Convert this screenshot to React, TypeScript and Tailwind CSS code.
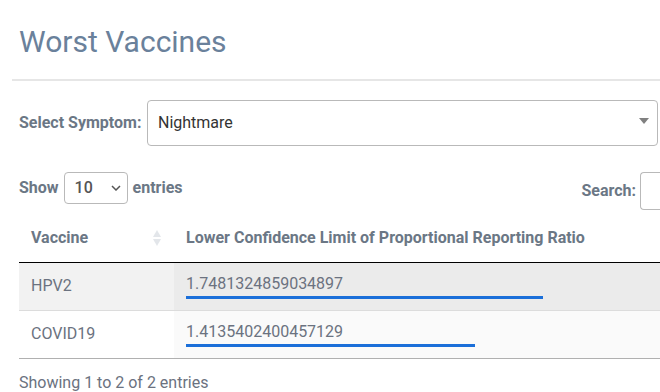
import React from 'react';

const rows = [
  { vaccine: 'HPV2', value: 1.7481324859034897 },
  { vaccine: 'COVID19', value: 1.4135402400457129 },
];

// widest bar in px, scaled by the max value
const maxBar = 357;
const maxValue = Math.max(...rows.map((r) => r.value));

const SortIcon = () => (
  <svg width="10" height="18" viewBox="0 0 10 18" className="text-gray-300">
    <path d="M5 1 L9 8 L1 8 Z" fill="currentColor" opacity="0.6" />
    <path d="M5 17 L9 10 L1 10 Z" fill="currentColor" opacity="0.6" />
  </svg>
);

export default function App() {
  return (
    <div className="w-[660px] h-[392px] overflow-hidden bg-white font-['Roboto',sans-serif]">
      <div className="w-[720px] pl-[12px]">
        <h1 className="pl-[7px] pt-[22px] pb-[17px] text-[30px] leading-[40px] text-[#6a819b]">
          Worst Vaccines
        </h1>
        <div className="h-[2px] bg-[#e6e6e6]" />

        <div className="pl-[7px]">
          <div className="flex items-center mt-[19px] h-[46px]">
            <span className="text-[16px] font-bold text-[#6b7785] w-[128px]">Select Symptom:</span>
            <div className="relative flex items-center w-[511px] h-[46px] border border-[#b9b9b9] rounded-[4px] pl-[10px] text-[16px] text-[#333]">
              Nightmare
              <svg width="10" height="6" viewBox="0 0 10 6" className="absolute right-[8px] top-[17px]">
                <path d="M0 0 L10 0 L5 6 Z" fill="#808080" />
              </svg>
            </div>
          </div>

          <div className="flex items-start justify-between mt-[26px] h-[32px] w-[641px]">
            <div className="flex items-center h-[32px] text-[16px] font-bold text-[#6b7785]">
              <span>Show</span>
              <div className="flex items-center justify-between ml-[5px] mr-[5px] w-[64px] h-[32px] border border-[#b9b9b9] rounded-[4px] pl-[10px] pr-[6px] text-[16px] font-medium text-[#555]">
                10
                <svg width="10" height="6" viewBox="0 0 10 6">
                  <path d="M1 1 L5 5 L9 1" fill="none" stroke="#555" strokeWidth="1.5" />
                </svg>
              </div>
              <span>entries</span>
            </div>
            <div className="flex items-center h-[38px] text-[16px] font-bold text-[#6b7785]">
              <span className="mr-[4px]">Search:</span>
              <div className="w-[20px] h-[38px] border border-[#b9b9b9] border-r-0 rounded-l-[4px]" />
            </div>
          </div>

          <table className="mt-[11px] w-[700px] border-collapse text-left">
            <thead>
              <tr className="h-[47px] border-b border-black">
                <th className="w-[155px] px-[12px] text-[16px] font-bold text-[#6b7785]">
                  <div className="flex items-center justify-between">
                    Vaccine
                    <SortIcon />
                  </div>
                </th>
                <th className="px-[12px] text-[16px] font-bold text-[#6b7785]">
                  Lower Confidence Limit of Proportional Reporting Ratio
                </th>
              </tr>
            </thead>
            <tbody>
              {rows.map((r, i) => (
                <tr key={r.vaccine} className={i === 0 ? 'border-b border-[#dcdcdc]' : 'border-b border-[#b0b0b0]'}>
                  <td className={`px-[12px] text-[16px] text-[#6b7280] ${i === 0 ? 'bg-[#f2f2f2]' : 'bg-white'}`}>
                    {r.vaccine}
                  </td>
                  <td className={`px-[12px] pt-[9px] pb-[11px] text-[16px] leading-[24px] text-[#6b7280] ${i === 0 ? 'bg-[#ebebeb]' : 'bg-[#fafafa]'}`}>
                    <div>{r.value}</div>
                    <div
                      className="h-[3px] bg-[#1b6fd9]"
                      style={{ width: `${(r.value / maxValue) * maxBar}px` }}
                    />
                  </td>
                </tr>
              ))}
            </tbody>
          </table>

          <div className="mt-[12px] text-[16px] leading-[24px] text-[#6b7280]">Showing 1 to 2 of 2 entries</div>
        </div>
      </div>
    </div>
  );
}
